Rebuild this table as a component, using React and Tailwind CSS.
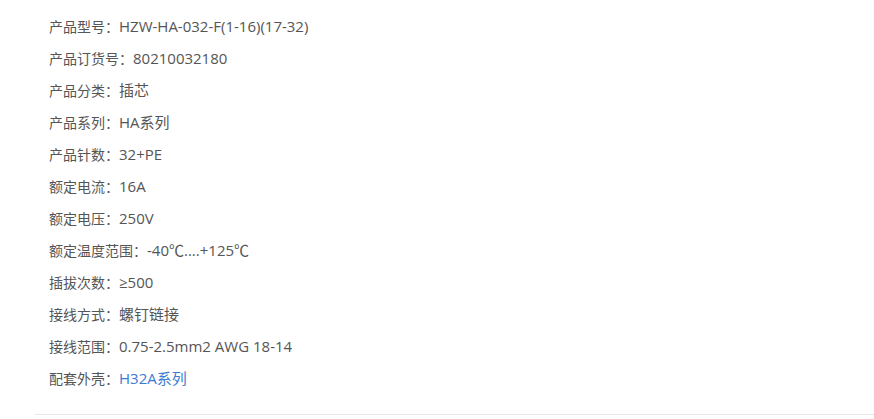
import React from 'react';

const specs = [
  { label: '产品型号', value: 'HZW-HA-032-F(1-16)(17-32)' },
  { label: '产品订货号', value: '80210032180' },
  { label: '产品分类', value: '插芯' },
  { label: '产品系列', value: 'HA系列' },
  { label: '产品针数', value: '32+PE' },
  { label: '额定电流', value: '16A' },
  { label: '额定电压', value: '250V' },
  { label: '额定温度范围', value: '-40℃....+125℃' },
  { label: '插拔次数', value: '≥500' },
  { label: '接线方式', value: '螺钉链接' },
  { label: '接线范围', value: '0.75-2.5mm2 AWG 18-14' },
  { label: '配套外壳', value: 'H32A系列', link: true },
];

export default function App() {
  return (
    <div
      className="bg-white w-full h-[419px] overflow-hidden"
      style={{ fontFamily: '"Open Sans", "Noto Sans CJK SC", sans-serif' }}
    >
      <div className="ml-[35px] border-b border-[#e6e6e6] pt-[10px] pb-[20px] pl-[14px]">
        {specs.map((item, index) => (
          <div key={index} className="h-8 leading-8 text-[14px] text-[#555]">
            <span style={{ fontFamily: '"Noto Sans CJK SC", sans-serif' }}>{item.label}：</span>
            {item.link ? (
              <a href="#" className="text-[15px] text-[#3a7bd5]">{item.value}</a>
            ) : (
              <span className="text-[15px]">{item.value}</span>
            )}
          </div>
        ))}
      </div>
    </div>
  );
}
